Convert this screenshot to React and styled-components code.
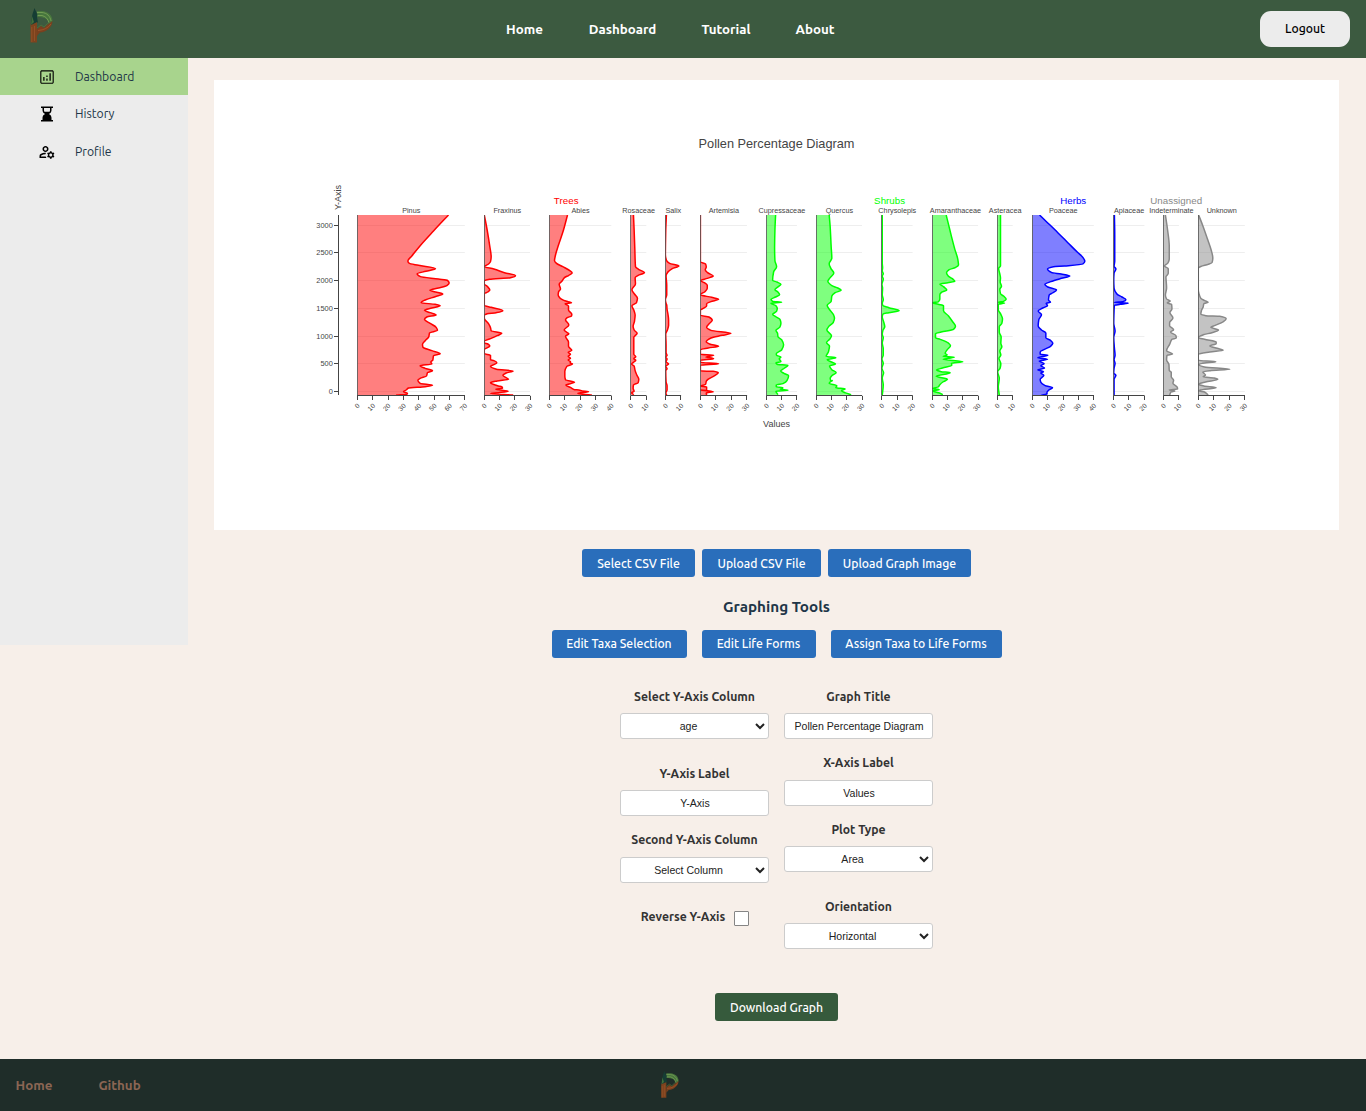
import React from "react";
import styled, { createGlobalStyle } from "styled-components";

const Global = createGlobalStyle`
  * { box-sizing: border-box; }
  body { margin: 0; background: #f7efe9; }
  button, a { font-family: inherit; }
`;
const Page = styled.div`
  min-height: 1111px;
  display: flex;
  flex-direction: column;
  background: #f7efe9;
  color: #213547;
  font-family: Ubuntu, "Noto Sans", "Open Sans", sans-serif;
`;
const Header = styled.header`
  height: 58px;
  background: #3c5a40;
  display: grid;
  grid-template-columns: 1fr auto 1fr;
  align-items: center;
  padding: 0 16px 0 29px;
`;
const Nav = styled.nav`
  display: flex;
  gap: 45px;
  margin-left: -39px;
  padding-top: 2px;
`;
const Fit = styled.span`
  display: inline-flex;
  justify-content: center;
  width: ${(p) => p.$w}px;
  white-space: nowrap;
`;
const NavLink = styled.a`
  color: #fff;
  font-size: 13.33px;
  line-height: 20px;
  font-weight: 700;
`;
const Logout = styled.button`
  justify-self: end;
  width: 90px;
  height: 36px;
  border: 0;
  border-radius: 11px;
  background: #ececec;
  color: #000;
  font-size: 12.2px;
  font-weight: 500;
  padding: 0 0 1px;
`;
const Body = styled.div`
  flex: 1;
  display: flex;
  align-items: flex-start;
`;
const Sidebar = styled.aside`
  width: 188px;
  height: 587px;
  background: #ececec;
`;
const SideItem = styled.a`
  height: 37.5px;
  display: flex;
  align-items: center;
  padding: 0 0 1px 38px;
  gap: 19px;
  font-size: 12.2px;
  color: #213547;
  background: ${(p) => (p.$active ? "#a8d48d" : "transparent")};
  svg { color: #000; flex: none; margin-top: 1px; }
  &:first-child { height: 37px; }
  &:last-child { padding-bottom: 0; }
`;
const Main = styled.main`
  width: 1125px;
  margin: 22px 0 0 26px;
  display: flex;
  flex-direction: column;
  align-items: center;
`;
const PlotCard = styled.section`
  width: 1125px;
  height: 450px;
  background: #fff;
  svg { display: block; }
`;
const ButtonRow = styled.div`
  display: flex;
  gap: ${(p) => p.$gap}px;
  margin-top: ${(p) => p.$top}px;
`;
const Button = styled.button`
  height: 28px;
  border: 0;
  border-radius: 3px;
  padding: 0 15px ${(p) => p.$raise || 0}px;
  background: ${(p) => (p.$green ? "#365a3c" : "#2a6ebb")};
  color: #fff;
  font-size: 12.2px;
  font-weight: 500;
`;
const Heading = styled.h3`
  margin: 19px 0 0;
  height: 22px;
  line-height: 22px;
  font-size: 15.24px;
  font-weight: 700;
`;
const Form = styled.form`
  display: grid;
  grid-template-columns: 149px 149px;
  gap: 15px;
  margin-top: 31px;
`;
const Column = styled.div`
  display: flex;
  flex-direction: column;
`;
const Field = styled.label`
  display: flex;
  flex-direction: column;
  align-items: center;
  gap: ${(p) => p.$gap || 8}px;
  margin-bottom: ${(p) => p.$mb || 0}px;
`;
const Caption = styled.span`
  height: 16px;
  line-height: 16px;
  font-size: 12.2px;
  font-weight: 700;
  color: #333;
`;
const control = `
  width: 149px;
  height: 26px;
  margin: 0;
  border: 1px solid #ccc;
  border-radius: 3px;
  background: #fff;
  color: #222;
  font: 10.55px "Liberation Sans", Arial, sans-serif;
  text-align: center;
`;
const Input = styled.input`${control} padding: 0 4px 0 5px;`;
const Select = styled.select`${control} padding: 0 4px; text-align-last: center;`;
const CheckRow = styled.label`
  display: flex;
  justify-content: center;
  gap: 8px;
`;
const CheckBox = styled.input`
  appearance: none;
  width: 15px;
  height: 15px;
  margin: 0;
  border: 1px solid #858585;
  border-radius: 1px;
  background: #fff;
`;
const CheckCaption = styled(Caption)`margin-top: -2px;`;
const Footer = styled.footer`
  height: 52px;
  background: #1f2d29;
  display: grid;
  grid-template-columns: 1fr auto 1fr;
  align-items: center;
  padding: 0 42px 0 15px;
`;
const FooterLinks = styled.div`
  display: flex;
  gap: 45px;
  padding-top: 2px;
`;
const FooterLink = styled.a`
  color: #8b6654;
  font-size: 13.33px;
  line-height: 20px;
  font-weight: 700;
`;
const LogoArt = styled.svg`
  display: block;
  margin-bottom: ${(p) => p.$lift || 0}px;
`;

function Logo({ width, height, lift }) {
  return (
    <LogoArt width={width} height={height} $lift={lift} viewBox="0 0 24 36" preserveAspectRatio="none">
      <path d="M1.500 16 8 14V34.500H1.500Z" fill="#7d431e" />
      <path d="M2.800 19V34M5.500 18V33" stroke="#98552a" strokeWidth=".8" />
      <path d="M8 3H13C19 3.500 23.500 7 23.500 13L20.500 17C19.500 11 16 9 8 9Z" fill="#47763d" />
      <path d="M8 4.500H13C18 5 21 8 22 13M8 7.500H13C17 8.500 19 11 20 15" fill="none" stroke="#7ea45a" strokeWidth=".8" />
      <path d="M8 21 12 18 15 20 18 17 23.500 13C23 20 17 24 11 24.500L8 28Z" fill="#7a401e" />
      <path d="M9 22.500C15 22 19 20 22 16" fill="none" stroke="#a2592a" strokeWidth=".8" />
      <path d="M8 20 12 17 15 19 18 16 22 13" fill="none" stroke="#4c713b" strokeWidth=".9" />
      <path d="M5.500 0 3.500 6 2 14V17L8 14 9 15 8 9 8.500 7Z" fill="#153d34" />
      <path d="M3 8 2 17 5 14Z" fill="#416f3c" />
    </LogoArt>
  );
}

const ChartIcon = () => (
  <svg width="18" height="18" viewBox="0 0 24 24" fill="currentColor">
    <path d="M19 3H5c-1.1 0-2 .9-2 2v14c0 1.1.9 2 2 2h14c1.1 0 2-.9 2-2V5c0-1.1-.9-2-2-2zm0 16.500H5a.5.5 0 0 1-.5-.5V5a.5.5 0 0 1 .5-.5h14a.5.5 0 0 1 .5.5v14a.5.5 0 0 1-.5.5z" />
    <path d="M7 12h1.700v5H7zM15.300 7H17v10h-1.700zM11.100 14h1.700v3h-1.700zM11.100 10h1.700v2h-1.700z" />
  </svg>
);
const HourglassIcon = () => (
  <svg width="18" height="18" viewBox="0 0 24 24" fill="currentColor">
    <path d="M4 2h16v2h-2v3c0 2-1.2 4-3.5 5 2.3 1 3.5 3 3.5 5v3h2v2H4v-2h2v-3c0-2 1.2-4 3.5-5C7.200 11 6 9 6 7V4H4zM8 4v3c0 .7.200 1.400.6 2h6.800c.4-.6.6-1.300.6-2V4z" />
  </svg>
);
const ProfileIcon = () => (
  <svg width="18" height="18" viewBox="0 0 24 24" fill="currentColor">
    <path d="M4 18v-.65c0-.34.16-.66.41-.81C6.100 15.530 8.030 15 10 15c.03 0 .05 0 .08.010.1-.7.300-1.370.590-1.980-.22-.02-.44-.03-.67-.03-2.420 0-4.680.670-6.610 1.820-.88.520-1.390 1.500-1.390 2.530V20h9.260c-.42-.6-.75-1.280-.97-2H4zM10 12c2.210 0 4-1.790 4-4s-1.790-4-4-4-4 1.790-4 4 1.790 4 4 4zm0-6c1.100 0 2 .9 2 2s-.9 2-2 2-2-.9-2-2 .9-2 2-2zM20.750 16c0-.22-.03-.42-.06-.63l1.140-1.010-1-1.730-1.450.490c-.32-.27-.68-.48-1.080-.63L18 11h-2l-.3 1.490c-.4.150-.76.360-1.080.63l-1.450-.49-1 1.730 1.140 1.010c-.03.210-.06.410-.06.630s.030.420.060.630l-1.140 1.010 1 1.730 1.450-.49c.32.270.68.480 1.080.63L16 21h2l.3-1.490c.4-.15.76-.36 1.080-.63l1.450.490 1-1.730-1.140-1.010c.03-.21.060-.41.060-.63zM17 18c-1.100 0-2-.9-2-2s.9-2 2-2 2 .9 2 2-.9 2-2 2z" />
  </svg>
);

// Each trace is "offset,depth" pairs, in thirds of a pixel from the left and top of its panel.
const TAXA = [
  { name: "Pinus", x: 357.3, w: 107.5, max: 70, c: "#f00", d: "273,0 228,48 188,92 163,123 151,138 155,145 183,151 234,161 205,169 179,176 189,185 243,192 270,196 275,204 268,212 243,219 217,226 230,230 256,237 233,245 203,255 191,263 233,268 248,272 223,279 201,286 218,293 236,300 208,306 201,313 218,325 236,337 240,346 216,354 214,365 203,377 195,388 196,396 223,407 248,416 228,422 226,435 220,441 223,447 188,452 203,460 225,467 210,473 207,483 188,490 181,496 188,505 225,511 203,515 153,519 146,525 138,530 150,535 148,538 116,540" },
  { name: "Fraxinus", x: 484.3, w: 45.7, max: 30, c: "#f00", d: "0,0 8,45 16,95 20,125 18,140 12,147 0,155 28,162 60,173 93,182 78,188 15,193 0,197 0,207 8,214 16,225 10,231 0,236 0,271 20,277 55,287 35,293 8,296 0,301 0,310 12,326 18,338 20,347 52,355 38,362 18,371 0,379 0,384 10,387 16,393 0,404 0,416 18,421 18,434 28,437 37,443 28,449 18,454 36,463 86,468 65,474 55,481 72,493 38,498 18,503 32,510 42,513 53,516 54,520 34,523 71,529 42,533 18,535 86,540" },
  { name: "Abies", x: 549.3, w: 62, max: 40, c: "#f00", d: "54,0 42,45 27,90 18,120 15,137 21,145 40,155 61,167 68,174 58,181 45,188 37,199 29,208 33,222 27,231 26,240 32,250 43,256 56,260 66,263 47,266 57,273 57,285 67,298 66,303 53,308 48,314 58,330 44,345 52,352 58,356 48,364 57,381 57,394 67,406 56,412 63,418 56,424 63,430 56,435 63,440 62,444 69,447 52,454 46,469 46,484 48,494 75,502 49,510 64,518 75,524 88,525 98,528 117,530 85,535 101,538 127,540" },
  { name: "Rosaceae", x: 630.6, w: 15.7, max: 10, c: "#f00", d: "8,0 10,45 12,100 14,155 23,163 41,173 22,181 13,188 14,207 4,224 11,237 20,250 17,263 4,272 9,285 13,300 11,319 7,334 10,345 19,355 9,367 9,399 9,418 15,425 9,431 15,436 8,442 3,447 10,453 13,467 19,482 24,493 22,503 8,510 7,520 10,529 3,533 9,539" },
  { name: "Salix", x: 665.4, w: 15.5, max: 10, c: "#f00", d: "3,0 1,50 0,120 3,136 12,145 40,153 20,161 7,171 2,182 4,210 4,239 0,254 2,265 4,270 5,283 7,297 9,315 9,331 6,345 1,357 2,389 2,413 5,421 1,426 5,432 2,440 9,447 1,454 5,461 1,467 2,501 5,512 5,525 1,534 4,540" },
  { name: "Artemisia", x: 700.4, w: 46.5, max: 30, c: "#f00", d: "0,0 0,128 0,141 15,147 17,156 14,164 21,173 38,183 20,190 0,197 11,203 20,211 20,220 13,230 0,239 33,247 54,253 31,260 18,266 18,273 8,280 0,286 0,301 25,306 35,316 27,325 18,337 31,346 91,355 65,361 31,369 17,380 27,387 54,394 23,399 0,404 0,418 39,421 16,426 39,431 0,436 0,442 54,446 0,451 0,468 38,469 53,473 42,482 22,493 17,499 15,508 0,513 18,516 18,526 0,525 38,530 17,534 18,540" },
  { name: "Cupressaceae", x: 766.4, w: 30.5, max: 20, c: "#0f0", d: "27,0 25,45 24,100 25,137 30,155 21,171 18,196 31,201 43,208 35,215 25,224 34,231 39,239 27,246 13,253 18,259 45,262 13,265 28,272 32,280 30,289 18,298 29,306 40,313 43,324 40,336 28,346 33,355 34,365 45,374 51,389 45,405 29,416 30,421 43,426 38,431 43,440 28,443 32,448 64,451 54,459 42,468 52,475 66,482 61,497 49,506 29,510 29,515 49,519 41,523 64,526 28,529 34,539" },
  { name: "Quercus", x: 816.3, w: 45.7, max: 30, c: "#0f0", d: "38,0 41,35 44,95 46,130 38,146 43,160 52,174 41,188 34,199 46,212 64,219 74,226 56,233 46,243 44,259 32,271 40,285 51,299 54,310 50,323 37,334 31,345 45,362 40,372 30,383 39,393 36,410 29,424 58,428 32,434 45,441 57,447 39,453 46,464 59,473 46,482 41,490 43,498 49,496 38,505 61,512 58,518 86,522 75,527 85,533 104,539" },
  { name: "Chrysolepis", x: 881.6, w: 31, max: 20, c: "#0f0", d: "2,0 2,145 3,158 2,168 5,176 2,184 5,192 1,208 3,219 2,239 5,254 2,265 4,272 21,278 52,287 21,293 4,297 2,306 6,320 9,335 4,346 2,358 5,368 2,384 5,401 5,420 1,432 5,445 1,460 6,473 2,489 5,509 2,540" },
  { name: "Amaranthaceae", x: 932.3, w: 45.8, max: 30, c: "#0f0", d: "41,0 48,28 57,65 67,103 76,133 78,150 68,158 50,164 42,173 48,184 62,193 67,199 46,203 22,207 33,215 43,225 27,232 22,239 22,253 17,261 0,263 17,268 33,272 33,287 48,303 61,321 69,334 63,343 26,351 9,356 9,368 23,373 46,383 54,392 45,403 38,415 44,420 32,424 65,427 47,430 32,433 91,440 57,445 58,451 30,459 12,465 26,470 53,473 11,484 45,493 31,501 22,509 17,516 0,520 20,524 2,528 21,534 31,539" },
  { name: "Asteracea", x: 997.3, w: 15.4, max: 10, c: "#0f0", d: "9,0 9,125 9,153 4,160 7,177 9,189 8,201 12,214 7,223 9,236 19,244 26,253 18,259 3,262 21,264 3,268 3,284 10,298 15,311 13,325 6,335 6,352 11,366 10,385 13,395 7,408 10,420 5,430 10,446 8,459 1,470 6,490 3,515 6,540" },
  { name: "Poaceae", x: 1032.3, w: 61.5, max: 40, c: "#00f", d: "21,0 45,23 76,53 106,83 135,112 151,127 157,139 151,147 96,153 63,155 45,162 58,173 86,177 112,183 87,190 55,200 37,208 46,216 72,225 60,234 50,240 48,255 54,262 41,265 45,272 31,279 17,288 27,299 19,314 17,333 27,345 40,354 40,368 54,376 61,385 54,394 36,403 23,411 23,418 46,421 16,428 45,433 20,438 35,446 25,452 36,459 16,465 33,470 25,474 34,481 23,493 25,502 38,512 60,518 49,525 43,534 44,537 27,540" },
  { name: "Apiaceae", x: 1113.4, w: 31, max: 20, c: "#00f", d: "3,0 4,60 4,139 2,154 7,162 2,174 1,195 2,220 10,237 25,246 37,254 28,260 2,262 44,264 20,268 3,271 2,286 1,325 5,348 1,367 3,399 5,421 2,434 5,445 2,460 1,474 7,481 2,493 2,540" },
  { name: "Indeterminate", x: 1163.4, w: 15.5, max: 10, c: "#888", d: "6,0 12,45 17,94 17,132 13,144 3,153 14,161 14,175 7,186 8,201 9,219 6,240 9,252 20,258 11,264 24,268 25,282 19,293 28,309 18,323 18,332 30,344 21,351 37,362 38,369 25,373 18,388 9,407 27,417 10,421 9,435 16,448 17,466 23,472 23,485 30,496 28,505 41,517 42,522 17,525 34,528 22,531 18,540" },
  { name: "Unknown", x: 1198.3, w: 46.5, max: 30, c: "#888", d: "1,0 14,35 28,75 38,105 43,129 41,142 29,148 8,154 0,160 0,224 2,236 7,250 19,257 29,262 16,266 14,276 9,286 7,297 22,302 64,304 83,311 73,321 50,331 37,337 60,345 38,354 18,358 0,368 18,373 53,381 53,386 34,393 56,400 74,406 34,411 0,418 0,436 52,440 12,445 1,449 18,456 94,463 35,467 13,471 21,480 14,485 47,489 58,493 21,501 1,508 16,513 53,518 6,525 1,528 18,531 29,540" },
];

// Monotone cubic interpolation down the depth axis.
function trace(t) {
  const p = t.d.split(" ").map((s) => s.split(",").map(Number)).map(([x, y]) => [t.x + x / 3 + (x > 6 ? 0.2 : 0), 215 + y / 3]);
  const slope = (a, b) => (b[0] - a[0]) / (b[1] - a[1] || 1);
  const m = p.map((q, i) => {
    if (i === 0) return slope(q, p[1]);
    if (i === p.length - 1) return slope(p[i - 1], q);
    const a = slope(p[i - 1], q);
    const b = slope(q, p[i + 1]);
    return a * b <= 0 ? 0 : (2 * a * b) / (a + b);
  });
  let s = `M${p[0][0]},${p[0][1]}`;
  for (let i = 1; i < p.length; i++) {
    const h = (p[i][1] - p[i - 1][1]) / 3;
    s += `C${p[i - 1][0] + m[i - 1] * h},${p[i - 1][1] + h} ${p[i][0] - m[i] * h},${p[i][1] - h} ${p[i][0]},${p[i][1]}`;
  }
  return s;
}

const LEVELS = [[3000, 225.5], [2500, 252.5], [2000, 280.5], [1500, 308.5], [1000, 336.5], [500, 363.5], [0, 391.5]];
const GROUPS = [["Trees", 566.2, "#f00", 25], ["Shrubs", 889.6, "#0f0", 31], ["Herbs", 1073.2, "#00f", 26], ["Unassigned", 1176.2, "#888", 52]];

function PollenDiagram() {
  return (
    <svg width="1125" height="450" viewBox="214 80 1125 450" fontFamily='"Liberation Sans", Arial, sans-serif' fill="#444">
      <text x="776.5" y="148" fontSize="12.75" textAnchor="middle">Pollen Percentage Diagram</text>
      <text x="776.5" y="427" fontSize="9" textAnchor="middle">Values</text>
      <text transform="translate(341 197.500) rotate(-90)" fontSize="9" textAnchor="middle">Y-Axis</text>
      {GROUPS.map(([n, x, c, w]) => (
        <text key={n} x={x} y="204" fontSize="9.75" textLength={w} textAnchor="middle" fill={c}>{n}</text>
      ))}
      {LEVELS.map(([v, y]) => (
        <g key={v}>
          <text x="332.8" y={y + 2.5} fontSize="7.4" textAnchor="end">{v}</text>
          <path d={`M334 ${y}H338`} stroke="#444" />
        </g>
      ))}
      <path d="M338.500 215V395" stroke="#444" />
      {TAXA.map((t) => {
        const line = trace(t);
        return (
          <g key={t.name}>
            <clipPath id={`panel-${t.name}`}>
              <rect x={t.x} y="215" width={t.w} height="180" />
            </clipPath>
            {LEVELS.map(([v, y]) => <path key={v} d={`M${t.x} ${y}h${t.w}`} stroke="#eee" />)}
            <g clipPath={`url(#panel-${t.name})`}>
              <path d={`${line}L${t.x},395V215Z`} fill={t.c} fillOpacity=".5" />
              <path d={line} fill="none" stroke={t.c} strokeWidth="1.5" />
            </g>
            <path d={`M${Math.floor(t.x) + 0.5} 215V395`} stroke="#444" strokeWidth=".75" />
            <path d={`M${t.x - 0.3} 395.500h${t.w + 0.5}`} stroke="#444" />
            <text x={t.x + t.w / 2 + 0.2} y="213" fontSize="7.25" textAnchor="middle">{t.name}</text>
            {Array.from({ length: t.max / 10 + 1 }, (_, i) => {
              const x = t.x + (t.w * i * 10) / t.max;
              return (
                <g key={i}>
                  <path d={`M${Math.floor(x) + 0.5} 396V400`} stroke="#444" />
                  <text transform={`translate(${x + 2.9} 406.200) rotate(-45)`} fontSize="6.600" textAnchor="end">{i * 10}</text>
                </g>
              );
            })}
          </g>
        );
      })}
    </svg>
  );
}

const Choice = ({ label, w, value, mb, gap }) => (
  <Field $mb={mb} $gap={gap}>
    <Caption><Fit $w={w}>{label}</Fit></Caption>
    <Select defaultValue={value}><option>{value}</option></Select>
  </Field>
);
const TextField = ({ label, w, value, mb, gap }) => (
  <Field $mb={mb} $gap={gap}>
    <Caption><Fit $w={w}>{label}</Fit></Caption>
    <Input defaultValue={value} />
  </Field>
);

export default function App() {
  return (
    <Page>
      <Global />
      <Header>
        <Logo width={24} height={36} lift={6} />
        <Nav>
          <NavLink><Fit $w={38}>Home</Fit></NavLink>
          <NavLink><Fit $w={68}>Dashboard</Fit></NavLink>
          <NavLink><Fit $w={49}>Tutorial</Fit></NavLink>
          <NavLink><Fit $w={39}>About</Fit></NavLink>
        </Nav>
        <Logout>Logout</Logout>
      </Header>
      <Body>
        <Sidebar>
          <SideItem $active><ChartIcon />Dashboard</SideItem>
          <SideItem><HourglassIcon />History</SideItem>
          <SideItem><ProfileIcon />Profile</SideItem>
        </Sidebar>
        <Main>
          <PlotCard><PollenDiagram /></PlotCard>
          <ButtonRow $gap={7} $top={19}>
            <Button><Fit $w={83}>Select CSV File</Fit></Button>
            <Button><Fit $w={89}>Upload CSV File</Fit></Button>
            <Button><Fit $w={113}>Upload Graph Image</Fit></Button>
          </ButtonRow>
          <Heading>Graphing Tools</Heading>
          <ButtonRow $gap={15} $top={12}>
            <Button $raise={1}><Fit $w={105}>Edit Taxa Selection</Fit></Button>
            <Button $raise={1}><Fit $w={84}>Edit Life Forms</Fit></Button>
            <Button $raise={1}><Fit $w={141}>Assign Taxa to Life Forms</Fit></Button>
          </ButtonRow>
          <Form>
            <Column>
              <Choice label="Select Y-Axis Column" w={121} value="age" mb={27} />
              <TextField label="Y-Axis Label" w={71} value="Y-Axis" mb={16} />
              <Choice label="Second Y-Axis Column" w={127} value="Select Column" mb={28} gap={9} />
              <CheckRow>
                <CheckCaption><Fit $w={85}>Reverse Y-Axis</Fit></CheckCaption>
                <CheckBox type="checkbox" />
              </CheckRow>
            </Column>
            <Column>
              <TextField label="Graph Title" w={64} value="Pollen Percentage Diagram" mb={16} />
              <TextField label="X-Axis Label" w={71} value="Values" mb={16} gap={9} />
              <Choice label="Plot Type" w={55} value="Area" mb={27} />
              <Choice label="Orientation" w={67} value="Horizontal" />
            </Column>
          </Form>
          <ButtonRow $gap={0} $top={44}>
            <Button $green><Fit $w={93}>Download Graph</Fit></Button>
          </ButtonRow>
        </Main>
      </Body>
      <Footer>
        <FooterLinks>
          <FooterLink><Fit $w={38}>Home</Fit></FooterLink>
          <FooterLink><Fit $w={43}>Github</Fit></FooterLink>
        </FooterLinks>
        <Logo width={19} height={28} lift={1} />
      </Footer>
    </Page>
  );
}
